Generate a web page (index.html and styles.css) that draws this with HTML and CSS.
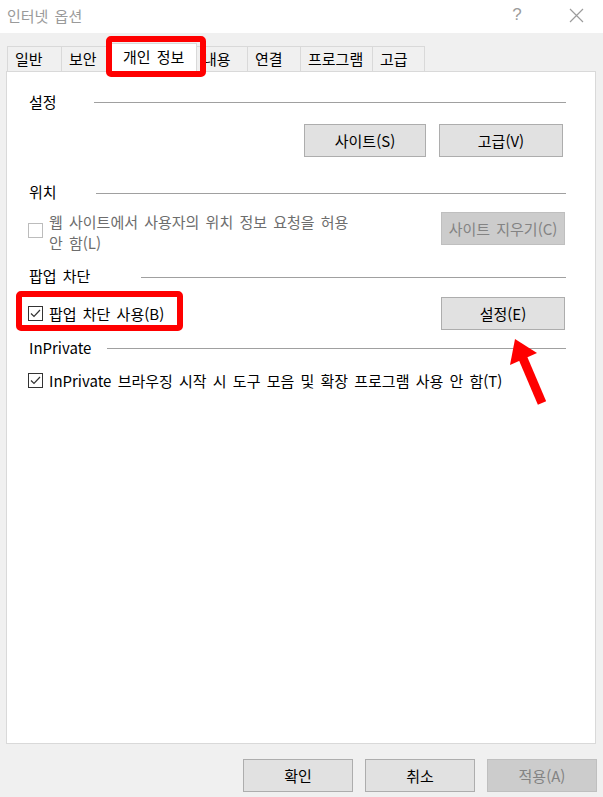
FILE: index.html
```html
<!DOCTYPE html>
<html lang="ko">
<head>
  <meta charset="UTF-8">
  <title>인터넷 옵션</title>
  <link rel="stylesheet" href="styles.css">
</head>
<body>
  <div class="dialog">
    <div class="titlebar">
      <span class="title">인터넷 옵션</span>
      <span class="help">?</span>
      <span class="close">
        <svg width="15" height="15" viewBox="0 0 15 15"><path d="M1 1L14 14M14 1L1 14" stroke="#9c9c9c" stroke-width="1.2" fill="none"/></svg>
      </span>
    </div>

    <div class="tabs">
      <div class="tab tab-general">일반</div>
      <div class="tab tab-security">보안</div>
      <div class="tab tab-privacy selected">개인 정보</div>
      <div class="tab tab-content">내용</div>
      <div class="tab tab-connect">연결</div>
      <div class="tab tab-program">프로그램</div>
      <div class="tab tab-advanced last">고급</div>
    </div>

    <div class="panel">
      <div class="group-head head-settings">
        <span class="group-title">설정</span>
        <span class="group-line"></span>
      </div>
      <div class="row row-settings">
        <button class="btn">사이트(S)</button>
        <button class="btn">고급(V)</button>
      </div>

      <div class="group-head head-location">
        <span class="group-title">위치</span>
        <span class="group-line"></span>
      </div>
      <div class="row row-location">
        <label class="check disabled">
          <span class="box"></span>
          <span class="check-text">웹 사이트에서 사용자의 위치 정보 요청을 허용 안 함(L)</span>
        </label>
        <button class="btn" disabled>사이트 지우기(C)</button>
      </div>

      <div class="group-head head-popup">
        <span class="group-title">팝업 차단</span>
        <span class="group-line"></span>
      </div>
      <div class="row row-popup">
        <label class="check">
          <span class="box checked">
            <svg width="13" height="13" viewBox="0 0 13 13"><path d="M2 6.5L5 9.5L11 3" stroke="#333" stroke-width="1.2" fill="none"/></svg>
          </span>
          <span class="check-text">팝업 차단 사용(B)</span>
        </label>
        <button class="btn">설정(E)</button>
      </div>

      <div class="group-head head-inprivate">
        <span class="group-title">InPrivate</span>
        <span class="group-line"></span>
      </div>
      <div class="row row-inprivate">
        <label class="check">
          <span class="box checked">
            <svg width="13" height="13" viewBox="0 0 13 13"><path d="M2 6.5L5 9.5L11 3" stroke="#333" stroke-width="1.2" fill="none"/></svg>
          </span>
          <span class="check-text">InPrivate 브라우징 시작 시 도구 모음 및 확장 프로그램 사용 안 함(T)</span>
        </label>
      </div>
    </div>

    <div class="footer">
      <button class="btn btn-footer">확인</button>
      <button class="btn btn-footer">취소</button>
      <button class="btn btn-footer" disabled>적용(A)</button>
    </div>

    <!-- 강조 표시 -->
    <div class="mark mark-tab"></div>
    <div class="mark mark-popup"></div>
    <svg class="arrow" width="60" height="80" viewBox="0 0 60 80">
      <polygon points="15,9 10,35 37,23" fill="#ff0000"/>
      <line x1="22" y1="26" x2="42" y2="73" stroke="#ff0000" stroke-width="9"/>
    </svg>
  </div>
</body>
</html>
```

FILE: styles.css
```css
body {
  margin: 0;
  background: #f0f0f0;
  font-family: 'Noto Sans CJK KR', 'Noto Sans', sans-serif;
  font-size: 15px;
  word-spacing: 2px;
  color: #000;
}
.dialog {
  position: relative;
  width: 603px;
  height: 797px;
  overflow: hidden;
}
.titlebar {
  display: flex;
  align-items: center;
  height: 33px;
  background: #fff;
}
.title {
  padding-left: 7px;
  color: #9a9a9a;
  line-height: 20px;
  margin-top: -2px;
}
.help {
  margin-left: auto;
  width: 64px;
  text-align: center;
  color: #9c9c9c;
  font-family: 'Liberation Sans', sans-serif;
  font-size: 17px;
  margin-top: -3px;
}
.close {
  display: flex;
  justify-content: center;
  width: 54px;
  margin-top: -3px;
}

/* 탭 */
.tabs {
  display: flex;
  align-items: flex-end;
  height: 25px;
  margin-top: 13px;
  padding-left: 7px;
}
.tab {
  box-sizing: border-box;
  height: 25px;
  padding-left: 7px;
  border: 1px solid #d9d9d9;
  border-right: none;
  border-bottom: none;
  line-height: 23px;
  white-space: nowrap;
}
.tab.last {
  border-right: 1px solid #d9d9d9;
}
.tab-general { width: 54px; }
.tab-security { width: 48px; }
.tab-privacy { width: 86px; }
.tab-content { width: 52px; }
.tab-connect { width: 53px; }
.tab-program { width: 72px; }
.tab-advanced { width: 53px; }
.tab.selected {
  position: relative;
  z-index: 1;
  width: 90px;
  height: 29px;
  margin: 0 -2px -1px;
  padding-left: 15px;
  border-right: 1px solid #d9d9d9;
  background: #fff;
  line-height: 25px;
}

/* 패널 */
.panel {
  box-sizing: border-box;
  width: 590px;
  height: 673px;
  margin-left: 6px;
  padding: 0 29px 0 22px;
  background: #fff;
  border: 1px solid #d9d9d9;
}
.group-head {
  display: flex;
  align-items: center;
  height: 20px;
  line-height: 20px;
}
.group-line {
  flex: 1;
  height: 1px;
  background: #a0a0a0;
}
.head-settings { margin-top: 20px; }
.head-settings .group-line { margin-left: 37px; }
.head-location { margin-top: 25px; }
.head-location .group-line { margin-left: 39px; margin-top: 2px; }
.head-popup { margin-top: 13px; }
.head-popup .group-line { margin-left: 51px; margin-top: 3px; }
.head-inprivate { margin-top: 8px; }
.head-inprivate .group-line { margin-left: 16px; margin-top: 1px; }

.row {
  display: flex;
  justify-content: space-between;
  align-items: center;
}
.row-settings {
  justify-content: flex-end;
  gap: 13px;
  margin-top: 12px;
  margin-right: 3px;
}
.row-settings .btn { width: 124px; }
.row-settings .btn:first-child { width: 122px; }
.row-location {
  align-items: flex-start;
  margin-top: 10px;
  margin-right: 1px;
}
.row-location .check-text {
  width: 310px;
  margin-top: -1px;
}
.row-location .box { margin-top: 11px; }
.row-popup {
  margin-top: 11px;
  margin-right: 1px;
}
.row-inprivate { margin-top: 12px; }

.check {
  display: flex;
  align-items: center;
  margin-left: -1px;
}
.row-location .check { align-items: flex-start; }
.box {
  box-sizing: border-box;
  display: flex;
  align-items: center;
  justify-content: center;
  flex: none;
  width: 15px;
  height: 15px;
  margin-right: 6px;
  background: #fff;
  border: 1px solid #333;
}
.check.disabled .box { border-color: #bcbcbc; }
.check-text { line-height: 21px; }
.check.disabled .check-text { color: #6d6d6d; }

/* 버튼 */
.btn {
  box-sizing: border-box;
  width: 124px;
  height: 33px;
  padding: 0;
  font-family: inherit;
  font-size: 15px;
  word-spacing: 2px;
  color: #000;
  background: #e1e1e1;
  border: 1px solid #adadad;
  border-radius: 0;
}
.btn:disabled {
  color: #838383;
  background: #cccccc;
  border-color: #bfbfbf;
}
.footer {
  display: flex;
  justify-content: flex-end;
  gap: 12px;
  margin-top: 15px;
  padding-right: 6px;
}
.btn-footer { width: 110px; }

/* 빨간 강조 */
.mark {
  position: absolute;
  box-sizing: border-box;
  border: 6px solid #ff0000;
  border-radius: 5px;
  z-index: 2;
}
.mark-tab {
  left: 106px;
  top: 36px;
  width: 100px;
  height: 41px;
}
.mark-popup {
  left: 16px;
  top: 291px;
  width: 167px;
  height: 40px;
}
.arrow {
  position: absolute;
  left: 500px;
  top: 330px;
  z-index: 2;
}
```
